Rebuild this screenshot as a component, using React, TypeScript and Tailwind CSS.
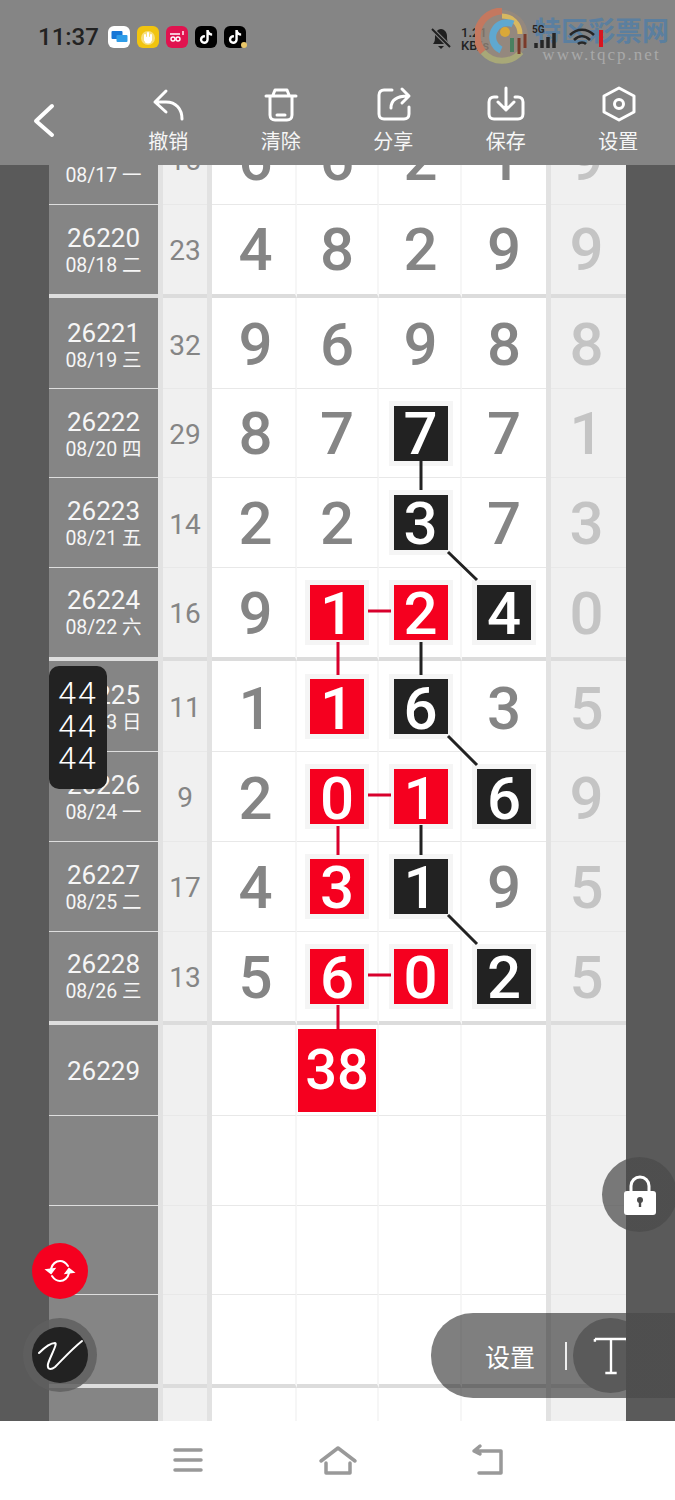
import { FaTiktok } from "react-icons/fa";

type Mark = "r" | "b" | undefined;
type Row = {
  id?: string;
  date?: string;
  sum?: string;
  nums?: [string, Mark][];
  last?: string;
  h: number;
  border: number;
  big?: boolean;
  shift?: number;
  lab?: number;
  sy?: number;
};

const CJK = "font-['Roboto','Noto_Sans_CJK_SC',sans-serif]";

const rows: Row[] = [
  { id: "26219", date: "08/17 一", sum: "15", nums: [["6", undefined], ["6", undefined], ["2", undefined], ["1", undefined]], last: "9", h: 90, border: 1, sy: 1 },
  { id: "26220", date: "08/18 二", sum: "23", nums: [["4", undefined], ["8", undefined], ["2", undefined], ["9", undefined]], last: "9", h: 93, border: 4, shift: 0, lab: 0, sy: 1 },
  { id: "26221", date: "08/19 三", sum: "32", nums: [["9", undefined], ["6", undefined], ["9", undefined], ["8", undefined]], last: "8", h: 91, border: 1, shift: 2, lab: 2, sy: 3 },
  { id: "26222", date: "08/20 四", sum: "29", nums: [["8", undefined], ["7", undefined], ["7", "b"], ["7", undefined]], last: "1", h: 89, border: 1, shift: 1, lab: 1, sy: 2 },
  { id: "26223", date: "08/21 五", sum: "14", nums: [["2", undefined], ["2", undefined], ["3", "b"], ["7", undefined]], last: "3", h: 90, border: 1, shift: 1, sy: 2 },
  { id: "26224", date: "08/22 六", sum: "16", nums: [["9", undefined], ["1", "r"], ["2", "r"], ["4", "b"]], last: "0", h: 93, border: 4, shift: 1, lab: -1, sy: 1 },
  { id: "26225", date: "08/23 日", sum: "11", nums: [["1", undefined], ["1", "r"], ["6", "b"], ["3", undefined]], last: "5", h: 91, border: 1, shift: 3, lab: 1, sy: 2 },
  { id: "26226", date: "08/24 一", sum: "9", nums: [["2", undefined], ["0", "r"], ["1", "r"], ["6", "b"]], last: "9", h: 90, border: 1, shift: 2, sy: 1 },
  { id: "26227", date: "08/25 二", sum: "17", nums: [["4", undefined], ["3", "r"], ["1", "b"], ["9", undefined]], last: "5", h: 90, border: 1, shift: 1, sy: 1 },
  { id: "26228", date: "08/26 三", sum: "13", nums: [["5", undefined], ["6", "r"], ["0", "r"], ["2", "b"]], last: "5", h: 93, border: 4, shift: 1, lab: -1, sy: 1 },
  { id: "26229", h: 91, border: 1, big: true, lab: 1 },
  { h: 90, border: 1 },
  { h: 89, border: 1 },
  { h: 93, border: 4 },
  { h: 90, border: 0 },
];

const tools = [
  { label: "撤销", icon: <path d="M166 91 155 102 166 112M155 102H166C176 102 182 109 182 119" /> },
  {
    label: "清除",
    icon: (
      <>
        <path d="M266 96H296M273 95 275 90H287L289 95M270 97V115C270 118 272 120 275 120H287C290 120 292 118 292 115V97" />
        <path d="M277 115H285" />
      </>
    ),
  },
  {
    label: "分享",
    icon: <path d="M392 90H384C381 90 379 92 379 95V114C379 117 381 119 384 119H404C407 119 409 117 409 114V107M391 108C391 100 396 96 408 96M402 89 409 96 402 103" />,
  },
  {
    label: "保存",
    icon: <path d="M497 97H494C491 97 489 99 489 102V114C489 117 491 119 494 119H518C521 119 523 117 523 114V102C523 99 521 97 518 97H515M506 88V110M498 102 506 110 514 102" />,
  },
  {
    label: "设置",
    icon: (
      <>
        <path d="M619 88 634 96V112L619 120 604 112V96Z" />
        <circle cx="619" cy="104" r="4.5" />
      </>
    ),
  },
];

const lines = [
  { c: "#222222", d: "M421 461V490M448 552 477 580M421 642V675M448 736 477 765M421 825V855M448 915 477 944" },
  { c: "#d8002c", d: "M338 642V675M368 611H391M368 795H391M338 826V855M368 975H391M338 1005V1030" },
];

function Digit({ value, mark, shift }: { value: string; mark: Mark; shift: number }) {
  const text = <span style={{ transform: `translateY(${shift}px)` }} className="block">{value}</span>;
  if (!mark) return <span className="text-[60px] leading-none font-medium text-[#858585]">{text}</span>;
  return (
    <span
      className={`flex h-[55px] w-[54px] items-center justify-center text-[60px] leading-none font-medium text-white ring-[5px] ring-[#f5f5f5] ${
        mark === "r" ? "bg-[#f5001f]" : "bg-[#222222]"
      }`}
    >
      {text}
    </span>
  );
}

function TableRow({ row }: { row: Row }) {
  const lineColor = row.border > 1 ? "border-[#dcdcdc]" : "border-[#e8e8e8]";
  const shift = row.shift ?? 0;
  return (
    <div
      className="grid grid-cols-[109px_5px_44px_5px_85px_82px_83px_84px_5px_75px]"
      style={{ height: row.h }}
    >
      <div className={`flex flex-col items-center justify-center border-b-[#dedede] bg-[#858585] text-[#f6f6f6] ${row.border > 1 ? "border-b-4" : row.border ? "border-b" : ""}`}>
        <div style={{ transform: `translateY(${row.lab ?? 0}px)` }} className="flex flex-col items-center">
          {row.id && <span className="text-[26px] leading-[32px]">{row.id}</span>}
          {row.date && <span className="text-[19.5px] leading-[24px]">{row.date}</span>}
        </div>
      </div>
      <div className="bg-[#e2e2e2]" />
      <div className={`flex items-center justify-center bg-[#f0f0f0] text-[28px] text-[#858585] ${lineColor}`} style={{ borderBottomWidth: row.border }}>
        <span style={{ transform: `translateY(${row.sy ?? 0}px)` }}>{row.sum}</span>
      </div>
      <div className="bg-[#e2e2e2]" />
      {[0, 1, 2, 3].map((i) => (
        <div
          key={i}
          className={`flex items-center justify-center bg-white ${lineColor} ${i < 3 ? "border-r-2 border-r-[#f6f6f6]" : ""} ${i === 0 ? "pl-[4px]" : i === 2 ? "pl-[2px]" : ""}`}
          style={{ borderBottomWidth: row.border }}
        >
          {row.nums && <Digit value={row.nums[i][0]} mark={row.nums[i][1]} shift={shift} />}
          {row.big && i === 1 && (
            <span className="flex h-[83px] w-[78px] items-center justify-center bg-[#f5001f] text-[56px] leading-none font-medium text-white">38</span>
          )}
        </div>
      ))}
      <div className="bg-[#e2e2e2]" />
      <div className={`flex items-center justify-center bg-[#f0f0f0] pr-[4px] text-[60px] leading-none font-medium text-[#c4c4c4] ${lineColor}`} style={{ borderBottomWidth: row.border }}>
        <span style={{ transform: `translateY(${shift}px)` }}>{row.last}</span>
      </div>
    </div>
  );
}

function StatusIcons() {
  return (
    <div className="flex items-center gap-[7px]">
      <span className="flex h-[22px] w-[22px] items-center justify-center rounded-[6px] bg-white">
        <svg width="17" height="14" viewBox="0 0 16 14">
          <rect x="0" y="1" width="11" height="8" rx="1" fill="#1877d6" />
          <rect x="5" y="5" width="11" height="7" rx="1" fill="#2f9de8" />
        </svg>
      </span>
      <span className="flex h-[22px] w-[22px] items-center justify-center rounded-[6px] bg-[#f1c40f]">
        <svg width="14" height="15" viewBox="0 0 14 15">
          <circle cx="7" cy="8" r="7" fill="#f7de7a" />
          <path d="M4 5V10M7 3V10M10 5V10" stroke="#fff" strokeWidth="2" strokeLinecap="round" />
          <circle cx="7" cy="10" r="3.5" fill="#fff" />
        </svg>
      </span>
      <span className="flex h-[22px] w-[22px] items-center justify-center rounded-[6px] bg-[#e0134f]">
        <svg width="18" height="16" viewBox="0 0 18 16" fill="none" stroke="#fff" strokeWidth="1.4">
          <circle cx="5" cy="10" r="2" />
          <circle cx="10" cy="10" r="2" />
          <path d="M2 5H12M15 2V6" />
        </svg>
      </span>
      <span className="flex h-[22px] w-[22px] items-center justify-center rounded-[6px] bg-black text-[14px] text-white">
        <FaTiktok />
      </span>
      <span className="relative flex h-[22px] w-[22px] items-center justify-center rounded-[6px] bg-black text-[14px] text-white">
        <FaTiktok />
        <span className="absolute right-[-1px] bottom-0 h-[6px] w-[6px] rounded-full bg-[#e8c66a]" />
      </span>
    </div>
  );
}

function Watermark() {
  return (
    <div className="absolute top-[8px] left-[475px] flex items-start gap-[3px]">
      <svg width="56" height="56" viewBox="0 0 56 56" fill="none">
        <circle cx="27" cy="28" r="26" fill="#9a8a7c" fillOpacity="0.75" />
        <path d="M27 3A25 25 0 0 0 8 44" stroke="#c4785f" strokeWidth="7" />
        <path d="M8 44A25 25 0 0 0 46 44" stroke="#a8a878" strokeWidth="6" />
        <path d="M27 8A18 18 0 0 1 45 26" stroke="#d8b860" strokeWidth="5" />
        <path d="M38 16A14 14 0 1 0 26 42" stroke="#5fa8d0" strokeWidth="7" />
        <circle cx="30" cy="24" r="5" fill="#d9a838" />
        <path d="M44 30V46M50 26V40" stroke="#7a3a2a" strokeWidth="3" />
        <path d="M37 30V44" stroke="#4a8060" strokeWidth="4" />
      </svg>
      <div className="flex w-[135px] flex-col items-center pt-[4px]">
        <span className="font-['Noto_Sans_CJK_SC',sans-serif] text-[27px] leading-[36px] font-bold text-[#5b7f9f]">特区彩票网</span>
        <span className="font-['Liberation_Serif',serif] text-[17px] leading-[14px] tracking-[2px] text-[#a9a9a9]">www.tqcp.net</span>
      </div>
    </div>
  );
}

function Header() {
  return (
    <header className="relative h-[165px] w-full shrink-0 bg-[#858585]">
      <div className="flex items-center gap-[10px] pt-[23px] pl-[38px]">
        <span className="w-[60px] font-['Roboto',sans-serif] text-[24px] leading-[28px] font-medium whitespace-nowrap text-[#222222]">11:37</span>
        <StatusIcons />
      </div>

      {/* bell, speed, signal sit under the watermark */}
      <svg className="absolute top-[26px] left-[430px]" width="22" height="24" viewBox="0 0 22 24">
        <path d="M3 18C5 16 5 13 5 10C5 6 8 3 11 3C14 3 17 6 17 10C17 13 17 16 19 18Z" fill="#1f1f1f" />
        <path d="M8 20H14L11 23Z" fill="#1f1f1f" />
        <path d="M2 3 20 21" stroke="#858585" strokeWidth="4" />
        <path d="M2 3 20 21" stroke="#1f1f1f" strokeWidth="2" />
      </svg>
      <div className="absolute top-[26px] left-[461px] w-[30px] font-['Roboto',sans-serif] text-[13px] leading-[13px] font-medium text-[#222222]">
        <div>1.21</div>
        <div>KB/s</div>
      </div>
      <Watermark />
      <span className="absolute top-[24px] left-[532px] font-['Roboto',sans-serif] text-[10px] leading-[12px] font-bold text-[#262626]">5G</span>
      <svg className="absolute top-[24px] left-[533px]" width="80" height="26" viewBox="0 0 80 26">
        <path d="M3 24V19M9 24V16M15 24V13M21 24V9" stroke="#262626" strokeWidth="3.5" />
        <path d="M37 11C44 4 54 4 61 11M41 16C46 11 52 11 57 16M45 20C47 18 51 18 53 20" stroke="#262626" strokeWidth="2.5" fill="none" />
        <rect x="66" y="6" width="4" height="17" fill="#d8141f" />
      </svg>

      <svg className="absolute top-0 left-0" width="675" height="165" fill="none" stroke="#ffffff" strokeWidth="3" strokeLinecap="round" strokeLinejoin="round">
        <path d="M52 106 36 121 52 135" strokeWidth="4" />
        {tools.map((t) => (
          <g key={t.label}>{t.icon}</g>
        ))}
      </svg>
      <div className="absolute top-[127px] left-[112px] flex">
        {tools.map((t) => (
          <span key={t.label} className="w-[112.5px] text-center font-['Noto_Sans_CJK_SC',sans-serif] text-[20px] leading-[28px] text-[#f6f6f6]">
            {t.label}
          </span>
        ))}
      </div>
    </header>
  );
}

function BottomNav() {
  return (
    <nav className="flex h-[79px] w-full shrink-0 bg-white">
      <svg width="675" height="79" viewBox="0 1421 675 79" fill="none" stroke="#999999" strokeWidth="3.5" strokeLinecap="round" strokeLinejoin="round">
        <path d="M175 1450H201M175 1460H201M175 1470H201" />
        <path d="M321 1461 338 1448 355 1461M326 1463V1473H350V1463" />
        <path d="M474 1451H501V1473H479M480 1446 474 1451 480 1454" />
      </svg>
    </nav>
  );
}

export default function App() {
  return (
    <div className={`relative flex h-[1500px] w-[675px] flex-col overflow-hidden bg-white ${CJK}`}>
      <Header />
      <main className="relative flex h-[1256px] w-full shrink-0 overflow-hidden">
        <div className="w-[49px] shrink-0 bg-[#5a5a5a]" />
        <div className="w-[577px] shrink-0 overflow-hidden">
          <div className="mt-[-50px]">
            {rows.map((row, i) => (
              <TableRow key={i} row={row} />
            ))}
          </div>
        </div>
        <div className="w-[49px] shrink-0 bg-[#5a5a5a]" />

        {/* connectors between marked numbers */}
        <svg className="absolute top-0 left-0" width="675" height="1256" viewBox="0 165 675 1256" fill="none" strokeWidth="3">
          {lines.map((l) => (
            <path key={l.c} d={l.d} stroke={l.c} />
          ))}
        </svg>
      </main>

      {/* floating controls */}
      <div className="absolute top-[666px] left-[49px] flex h-[123px] w-[58px] flex-col items-center justify-center rounded-[10px] bg-[#222222] pb-[3px] text-[32px] leading-[32.5px] font-light tracking-[2px] text-white">
        <span>44</span>
        <span>44</span>
        <span>44</span>
      </div>

      <div className="absolute top-[1243px] left-[32px] flex h-[56px] w-[56px] items-center justify-center rounded-full bg-[#f5001f]">
        <svg width="32" height="32" viewBox="0 0 32 32" fill="none" stroke="#ffffff" strokeWidth="2" strokeLinecap="round">
          <path d="M7 14C8 9 12 6 16 6C19 6 22 8 24 11" />
          <path d="M25 18C24 23 20 26 16 26C13 26 10 24 8 21" />
          <path d="M3 15 7 18 10 14Z" fill="#ffffff" />
          <path d="M29 17 25 14 22 18Z" fill="#ffffff" />
        </svg>
      </div>

      <div className="absolute top-[1318px] left-[23px] flex h-[74px] w-[74px] items-center justify-center rounded-full bg-[#5f5f5f]/85">
        <div className="flex h-[56px] w-[56px] items-center justify-center rounded-full bg-[#222222]">
          <svg width="46" height="36" viewBox="0 0 46 36" fill="none" stroke="#ffffff" strokeWidth="2" strokeLinecap="round" strokeLinejoin="round">
            <path d="M2 16C8 10 14 6 18 6C21 6 13 20 11 27C10 33 14 33 18 30C26 22 35 12 45 4" />
          </svg>
        </div>
      </div>

      <div className="absolute top-[1157px] left-[602px] flex h-[75px] w-[75px] items-center justify-center rounded-full bg-[linear-gradient(to_right,rgba(0,0,0,0.5)_24px,rgba(0,0,0,0.13)_24px)]">
        <svg width="34" height="42" viewBox="0 0 34 42">
          <path d="M8 19V12C8 7 12 3 17 3C22 3 26 7 26 12V19" fill="none" stroke="#ffffff" strokeWidth="3" />
          <rect x="1" y="17" width="32" height="24" rx="3" fill="#ffffff" />
          <circle cx="17" cy="26" r="3" fill="#4a4a4a" />
          <rect x="15.8" y="27" width="2.4" height="6" fill="#4a4a4a" />
        </svg>
      </div>

      <div className="absolute top-[1313px] left-[431px] flex h-[85px] w-[244px] items-center rounded-l-[42px] bg-[linear-gradient(to_right,rgba(0,0,0,0.5)_195px,rgba(0,0,0,0.13)_195px)] pl-[54px]">
        <span className="w-[52px] font-['Noto_Sans_CJK_SC',sans-serif] text-[25px] leading-[30px] text-white">设置</span>
        <span className="ml-[28px] h-[28px] w-[2px] bg-[#eeeeee]" />
        <span className="absolute top-[5px] left-[142px] h-[75px] w-[53px] overflow-hidden">
          <span className="flex h-[75px] w-[75px] items-center justify-center rounded-full bg-[#5a5a5a]">
            <svg width="36" height="38" viewBox="0 0 38 40" fill="none" stroke="#ffffff" strokeWidth="2.5">
              <path d="M2 2H36M19 2V38M13 38H25" />
              <path d="M2 2V5M36 2V5" />
            </svg>
          </span>
        </span>
      </div>

      <BottomNav />
    </div>
  );
}
